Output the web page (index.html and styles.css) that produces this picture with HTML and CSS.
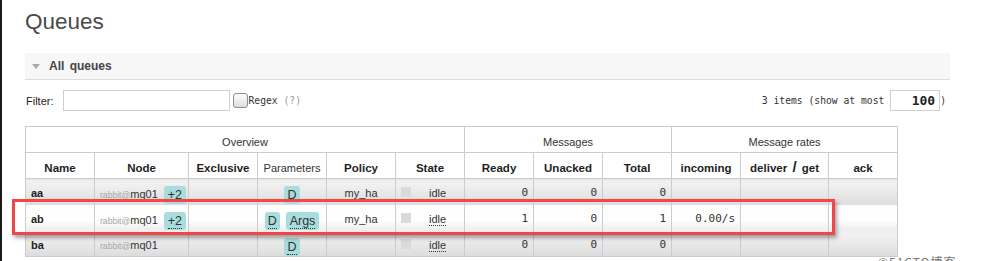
FILE: index.html
```html
<!DOCTYPE html>
<html lang="en">
<head>
<meta charset="utf-8">
<title>Queues</title>
<link rel="stylesheet" href="styles.css">
</head>
<body>
<div class="page">
  <h1 class="title">Queues</h1>
  <div class="section">
    <div class="section-head"><span class="tri"></span><span class="section-title">All queues</span></div>
    <div class="filter">
      <label class="flabel">Filter:</label>
      <input class="ftext" type="text">
      <span class="cbox"></span>
      <span class="mono regex">Regex <span class="help">(?)</span></span>
      <span class="spacer"></span>
      <span class="mono">3 items (show at most </span><span class="maxbox">100</span><span class="mono">)</span>
    </div>
    <table class="list">
      <colgroup>
        <col class="w69"><col class="w94"><col class="w69"><col class="w69"><col class="w69"><col class="w69">
        <col class="w69"><col class="w69"><col class="w69"><col class="w69"><col class="w88"><col class="w69">
      </colgroup>
      <thead>
        <tr class="group">
          <th colspan="6">Overview</th>
          <th colspan="3">Messages</th>
          <th colspan="3">Message rates</th>
        </tr>
        <tr class="cols">
          <th>Name</th>
          <th>Node</th>
          <th>Exclusive</th>
          <th class="plain">Parameters</th>
          <th>Policy</th>
          <th>State</th>
          <th>Ready</th>
          <th>Unacked</th>
          <th>Total</th>
          <th>incoming</th>
          <th>deliver <span class="slash">/</span> get</th>
          <th>ack</th>
        </tr>
      </thead>
      <tbody>
        <tr class="alt1">
          <td class="name">aa</td>
          <td class="node"><span class="host">rabbit@</span>mq01<span class="badge">+2</span></td>
          <td></td>
          <td class="c"><span class="badge narrow">D</span></td>
          <td class="c">my_ha</td>
          <td class="state"><div class="stwrap"><span class="key"></span><span class="st">idle</span></div></td>
          <td class="num">0</td>
          <td class="num">0</td>
          <td class="num">0</td>
          <td class="num"></td>
          <td></td>
          <td></td>
        </tr>
        <tr class="alt2">
          <td class="name">ab</td>
          <td class="node"><span class="host">rabbit@</span>mq01<span class="badge"><span class="u">+2</span></span></td>
          <td></td>
          <td class="c"><span class="badge narrow"><span class="u">D</span></span><span class="badge gap"><span class="u">Args</span></span></td>
          <td class="c">my_ha</td>
          <td class="state"><div class="stwrap"><span class="key"></span><span class="st"><span class="u">idle</span></span></div></td>
          <td class="num">1</td>
          <td class="num">0</td>
          <td class="num">1</td>
          <td class="num">0.00/s</td>
          <td></td>
          <td></td>
        </tr>
        <tr class="alt1 last">
          <td class="name">ba</td>
          <td class="node"><span class="host">rabbit@</span>mq01</td>
          <td></td>
          <td class="c"><span class="badge narrow"><span class="u">D</span></span></td>
          <td class="c"></td>
          <td class="state"><div class="stwrap"><span class="key"></span><span class="st"><span class="u">idle</span></span></div></td>
          <td class="num">0</td>
          <td class="num">0</td>
          <td class="num">0</td>
          <td class="num"></td>
          <td></td>
          <td></td>
        </tr>
      </tbody>
    </table>
  </div>
</div>
<div class="highlight"></div>
<div class="watermark">©51CTO博客</div>
</body>
</html>
```

FILE: styles.css
```css
html, body {
  margin: 0;
  padding: 0;
}

body {
  position: relative;
  height: 261px;
  overflow: hidden;
  border-left: 2px solid #1a1a1a;
  background: #fff;
  font-family: "Liberation Sans", Arial, sans-serif;
  font-size: 11px;
  color: #333;
}

.page {
  padding: 8px 31px 0 23px;
}

.title {
  margin: 0;
  font-size: 22.5px;
  font-weight: normal;
  line-height: 27px;
  color: #4a4a4a;
}

.section {
  margin-top: 18px;
}

.section-head {
  display: flex;
  align-items: center;
  height: 26px;
  padding-left: 7px;
  background: #f7f7f7;
  border-bottom: 1px solid #dcdcdc;
}

.tri {
  width: 0;
  height: 0;
  border-left: 4.5px solid transparent;
  border-right: 4.5px solid transparent;
  border-top: 5px solid #a8a8a8;
  margin-right: 9px;
}

.section-title {
  font-weight: bold;
  font-size: 12px;
  word-spacing: 2px;
  color: #444;
}

.filter {
  display: flex;
  align-items: center;
  height: 21px;
  margin-top: 10px;
  padding: 0 4px 0 1px;
}

.flabel {
  margin-right: 9px;
  color: #222;
}

.ftext {
  width: 167px;
  height: 21px;
  box-sizing: border-box;
  border: 1px solid #cfcfcf;
  margin: 0;
  padding: 0;
  background: #fff;
}

.cbox {
  width: 15px;
  height: 15px;
  box-sizing: border-box;
  margin-left: 3px;
  border: 1px solid #8f8f8f;
  border-radius: 3px;
  background: linear-gradient(#fdfdfd, #dedede);
}

.mono {
  font-family: "DejaVu Sans Mono", "Liberation Mono", monospace;
  font-size: 9.7px;
  color: #333;
  white-space: pre;
}

.regex {
  margin-left: 1px;
}

.help {
  color: #999;
}

.spacer {
  flex: 1;
}

.maxbox {
  width: 50px;
  height: 21px;
  box-sizing: border-box;
  border: 1px solid #cfcfcf;
  padding-right: 4px;
  text-align: right;
  font-family: "DejaVu Sans Mono", "Liberation Mono", monospace;
  font-weight: bold;
  font-size: 13px;
  line-height: 19px;
  color: #222;
}

.list {
  margin-top: 15px;
  border-collapse: collapse;
  table-layout: fixed;
  width: 873px;
}

.w69 { width: 69px; }
.w94 { width: 94px; }
.w88 { width: 88px; }

.list th,
.list td {
  height: 26px;
  box-sizing: border-box;
  padding: 7px 5px 0;
  line-height: 14px;
  vertical-align: top;
  white-space: nowrap;
}

.list th {
  border: 1px solid #cccccc;
  background: #fff;
  text-align: center;
}

.group th {
  font-weight: normal;
  font-size: 11px;
  padding-top: 8px;
}

.cols th {
  font-weight: bold;
  font-size: 11.5px;
  color: #1e1e1e;
  padding-top: 8px;
}

.cols th.plain {
  font-weight: normal;
  font-size: 11px;
  color: #333;
}

.slash {
  font-size: 15px;
  line-height: 10px;
  padding: 0 2px;
}

.list td {
  border-left: 1px solid #cccccc;
  border-right: 1px solid #cccccc;
  font-size: 11px;
}

.alt1 td {
  background: linear-gradient(#efefef, #f0f0f0 20%, #dcdcdc);
}

.alt2 td {
  background: linear-gradient(#fdfdfd, #ffffff 55%, #ececec);
}

.last td {
  border-bottom: 1px solid #cccccc;
}

.name {
  font-weight: bold;
  font-size: 11.5px;
  color: #1e1e1e;
}

.node {
  color: #333;
}

.host {
  font-size: 8.6px;
  color: #a6a6a6;
}

.c {
  text-align: center;
}

.badge {
  display: inline-block;
  padding: 2px 4px 1px;
  line-height: 15px;
  font-size: 12.5px;
  color: #333;
  background: #a9dcdc;
  border-radius: 3px;
  margin-left: 6px;
  vertical-align: -1px;
}

.badge.narrow {
  padding-left: 3px;
  padding-right: 3px;
}

.c .badge {
  margin-left: 0;
}

.c .badge.gap {
  margin-left: 6px;
}

.u {
  border-bottom: 1px dotted #333;
}

.list td.state {
  padding-right: 0;
}

.stwrap {
  display: flex;
  align-items: flex-start;
}

.key {
  width: 10px;
  height: 10px;
  margin-top: 1px;
  background: #dadada;
}

.st {
  flex: 1;
  text-align: center;
}

.num {
  text-align: right;
  font-family: "DejaVu Sans Mono", "Liberation Mono", monospace;
  font-size: 9.7px;
}

.highlight {
  position: absolute;
  left: 10px;
  top: 199px;
  width: 823px;
  height: 36px;
  box-sizing: border-box;
  border: 3px solid #f24545;
  box-shadow: 2px 3px 4px rgba(0, 0, 0, 0.35);
}

.watermark {
  position: absolute;
  left: 876px;
  top: 255px;
  font-family: "Noto Sans CJK SC", "Liberation Sans", sans-serif;
  font-size: 12px;
  line-height: 14px;
  color: #777;
  letter-spacing: 1px;
}
```
